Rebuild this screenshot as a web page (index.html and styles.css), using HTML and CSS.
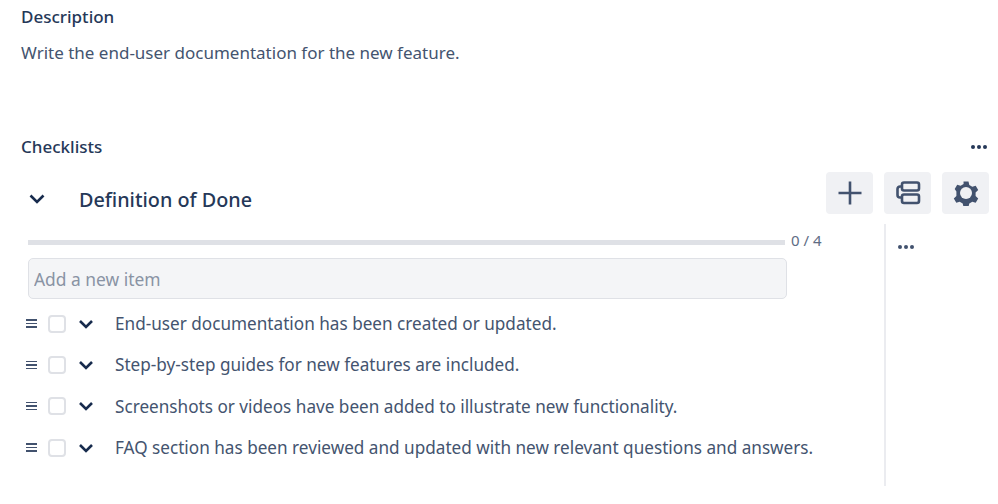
FILE: index.html
```html
<!DOCTYPE html>
<html lang="en">
<head>
  <meta charset="UTF-8" />
  <title>Checklists</title>
  <link rel="stylesheet" href="styles.css">
</head>
<body>

<h2 class="section-title desc-title">Description</h2>
<p class="desc-text">Write the end-user documentation for the new feature.</p>

<div class="section-head">
  <h2 class="section-title">Checklists</h2>
  <span class="dots head-dots"><i></i><i></i><i></i></span>
</div>

<div class="list-head">
  <svg class="chev-big" width="18" height="12" viewBox="0 0 18 12"><path d="M2.5 2.5 9 9l6.5-6.5" /></svg>
  <h3 class="list-title">Definition of Done</h3>
  <div class="tools">
    <button class="tool">
      <svg width="26" height="26" viewBox="0 0 26 26"><path d="M13 1.5v23M1.5 13h23" /></svg>
    </button>
    <button class="tool">
      <svg width="26" height="26" viewBox="0 0 26 26">
        <rect x="7" y="2.5" width="17" height="8" rx="2" />
        <rect x="7" y="14.5" width="17" height="8.5" rx="2" />
        <path d="M7 6.5H5a2.5 2.5 0 0 0-2.5 2.500v6A2.500 2.500 0 0 0 5 17.500h2" />
      </svg>
    </button>
    <button class="tool">
      <svg width="26" height="26" viewBox="0 0 26 26">
        <path class="gear-teeth" d="M10.500 1.500h5l.8 3.500 3 1.700 3.400-1 2.500 4.300-2.600 2.500v3.400l2.600 2.500-2.500 4.300-3.400-1-3 1.700-.8 3.500h-5l-.8-3.500-3-1.700-3.400 1-2.500-4.300 2.600-2.500V11.500L1.700 9l2.500-4.300 3.400 1 3-1.700z" />
        <circle cx="13" cy="13" r="6" class="gear-ring" />
      </svg>
    </button>
  </div>
</div>

<div class="list-body">
  <div class="list-main">
    <div class="progress-row">
      <div class="progress"></div>
      <span class="count">0 / 4</span>
    </div>
    <input class="new-item" type="text" placeholder="Add a new item">
    <ul class="items">
      <li class="item">
        <span class="grip"><i></i><i></i><i></i></span>
        <span class="check"></span>
        <svg class="chev" width="16" height="10" viewBox="0 0 16 10"><path d="M2 2l6 6 6-6" /></svg>
        <span class="item-text">End-user documentation has been created or updated.</span>
      </li>
      <li class="item">
        <span class="grip"><i></i><i></i><i></i></span>
        <span class="check"></span>
        <svg class="chev" width="16" height="10" viewBox="0 0 16 10"><path d="M2 2l6 6 6-6" /></svg>
        <span class="item-text">Step-by-step guides for new features are included.</span>
      </li>
      <li class="item">
        <span class="grip"><i></i><i></i><i></i></span>
        <span class="check"></span>
        <svg class="chev" width="16" height="10" viewBox="0 0 16 10"><path d="M2 2l6 6 6-6" /></svg>
        <span class="item-text">Screenshots or videos have been added to illustrate new functionality.</span>
      </li>
      <li class="item">
        <span class="grip"><i></i><i></i><i></i></span>
        <span class="check"></span>
        <svg class="chev" width="16" height="10" viewBox="0 0 16 10"><path d="M2 2l6 6 6-6" /></svg>
        <span class="item-text">FAQ section has been reviewed and updated with new relevant questions and answers.</span>
      </li>
    </ul>
  </div>
  <div class="list-side">
    <span class="dots side-dots"><i></i><i></i><i></i></span>
  </div>
</div>

</body>
</html>
```

FILE: styles.css
```css
body {
  margin: 0;
  padding: 0 8px 0 20px;
  font-family: "Noto Sans", sans-serif;
  background-color: white;
  color: #172b4d;
}
h2, h3, p, ul { margin: 0; padding: 0; }

.section-title {
  padding-left: 1px;
  font-size: 17px;
  line-height: 22px;
  font-weight: 500;
  color: #253858;
}
.desc-title { padding-top: 6px; }
.desc-text {
  margin-top: 13px;
  padding-left: 1px;
  font-size: 17px;
  line-height: 24px;
  color: #44546f;
}

.section-head {
  display: flex;
  justify-content: space-between;
  align-items: center;
  margin-top: 70px;
  height: 24px;
}
.dots { display: flex; gap: 2px; }
.dots i {
  width: 4px;
  height: 4px;
  border-radius: 50%;
  background-color: #253858;
}
.head-dots { margin-right: 3px; }
.side-dots i { background-color: #42526e; }

.list-head {
  display: flex;
  align-items: center;
  height: 44px;
  margin-top: 12px;
}
.chev-big { margin: 12px 0 0 8px; }
.chev-big path, .chev path {
  fill: none;
  stroke: #172b4d;
  stroke-width: 2.6;
}
.list-title {
  margin: 12px 0 0 33px;
  font-size: 19.8px;
  font-weight: 500;
  color: #253858;
}
.tools { margin-left: auto; margin-right: 1px; display: flex; gap: 11px; }
.tool {
  width: 47px;
  height: 42px;
  padding: 0;
  border: none;
  border-radius: 4px;
  background-color: #f0f1f4;
  display: flex;
  align-items: center;
  justify-content: center;
}
.tool svg * {
  fill: none;
  stroke: #42526e;
  stroke-width: 2.600;
}
.tool .gear-teeth { fill: #42526e; stroke: none; }
.tool .gear-ring { fill: #f0f1f4; stroke: none; }

.list-body { display: flex; margin-top: 9px; }
.list-main { width: 864px; padding-top: 13px; box-sizing: border-box; }
.progress-row { display: flex; align-items: center; margin-left: 8px; height: 10px; }
.progress {
  width: 757px;
  height: 5px;
  background-color: #dfe1e6;
}
.count {
  margin: 0 0 4px 6px;
  font-size: 15px;
  color: #5e6c84;
}
.new-item {
  display: block;
  box-sizing: border-box;
  width: 759px;
  height: 41px;
  margin: 11px 0 0 8px;
  padding: 0 5px;
  border: 1px solid #dfe1e6;
  border-radius: 5px;
  background-color: #f4f5f7;
  font-family: inherit;
  font-size: 17.4px;
  color: #172b4d;
}
.new-item::placeholder { color: #8993a4; }

.items { list-style: none; margin-top: 4px; padding-bottom: 18px; }
.item {
  display: flex;
  align-items: center;
  height: 41.300px;
}
.grip {
  display: flex;
  flex-direction: column;
  gap: 2px;
  width: 11px;
  margin-left: 6px;
}
.grip i { height: 1.500px; background-color: #42526e; }
.check {
  box-sizing: border-box;
  width: 18px;
  height: 18px;
  margin-left: 11px;
  border: 2px solid #dfe1e6;
  border-radius: 4px;
  background-color: white;
}
.chev { margin-left: 12px; }
.item-text {
  margin-left: 21px;
  font-size: 17.17px;
  color: #44546f;
}

.list-side {
  flex: 1;
  border-left: 2px solid #ebecf0;
  padding: 21px 0 0 12px;
}
```
